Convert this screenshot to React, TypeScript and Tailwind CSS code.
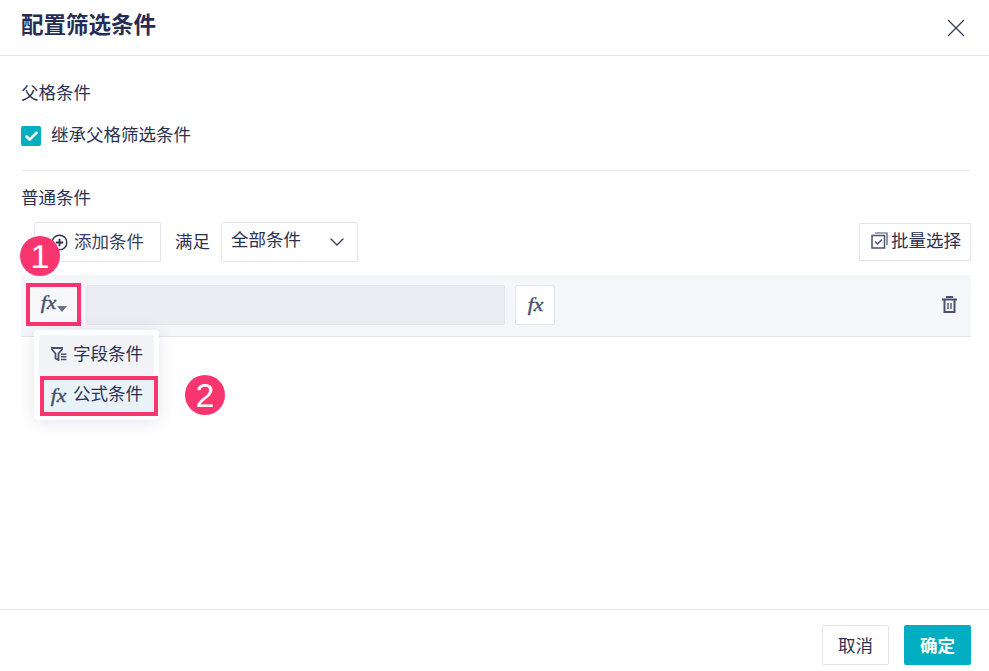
import React from "react";
import { Check, ChevronDown, X } from "lucide-react";

const font = { fontFamily: '"Noto Sans CJK SC", "Noto Sans", sans-serif' };

function Fx({ className = "" }: { className?: string }) {
  return (
    <span
      className={"inline-block italic font-normal leading-none text-[#4a5070] scale-x-[1.2] [-webkit-text-stroke:0.4px_#4a5070] " + className}
      style={{ fontFamily: '"Liberation Serif", serif' }}
    >
      fx
    </span>
  );
}

function Trash() {
  return (
    <svg width="15" height="17" viewBox="0 0 15 17" fill="none" stroke="#4a5070" strokeWidth="2">
      <path d="M0 3.500h15" />
      <path d="M4 1h7" />
      <path d="M2.500 3.500v12.500h10V3.500" />
      <path d="M6 7v6M9 7v6" strokeWidth="1.400" />
    </svg>
  );
}

function Batch() {
  return (
    <svg width="17" height="17" viewBox="0 0 17 17" fill="none" stroke="#4a5070" strokeWidth="1.500">
      <rect x="1" y="3.500" width="12.500" height="12.500" />
      <path d="M4 1h12v12" strokeWidth="1.200" />
      <path d="M4 9.500l2.500 2.500 4.500-4.500" />
    </svg>
  );
}

function FilterIcon() {
  return (
    <svg width="16" height="14" viewBox="0 0 16 14" fill="none">
      <path d="M1 1h10v1.500L7.500 6.500V13L4.500 11.500V6.500L1 2.500z" stroke="#4a5070" strokeWidth="1.800" />
      <path d="M10 7.200h5.500M10 9.800h5.500M10 12.400h5.500" stroke="#4a5070" strokeWidth="1.500" />
    </svg>
  );
}

function PlusCircle() {
  return (
    <svg width="17" height="17" viewBox="0 0 17 17" fill="none" stroke="#2c3152" strokeWidth="1.400">
      <circle cx="8.500" cy="8.500" r="7.300" />
      <path d="M8.500 4.800v7.400M4.800 8.500h7.400" strokeWidth="1.800" />
    </svg>
  );
}

function Badge({ n, className }: { n: number; className: string }) {
  return (
    <div
      className={
        "absolute w-10 h-10 rounded-full bg-[#f9356f] text-white text-[34px] leading-none flex items-center justify-center " +
        className
      }
      style={{ fontFamily: '"Liberation Sans", sans-serif' }}
    >
      {n}
    </div>
  );
}

export default function App() {
  return (
    <div className="relative w-[989px] h-[671px] bg-white flex flex-col text-[#2c3152] overflow-hidden text-[17.5px]" style={font}>
      <header className="h-[56px] shrink-0 border-b border-[#e6e7ea] flex items-center justify-between pl-[21px] pr-[18px] pb-[8px]">
        <h1 className="text-[22.5px] font-bold leading-none text-[#262d55] -mt-[1px]">配置筛选条件</h1>
        <X size={30} strokeWidth={1.1} className="text-[#3a4060] -mb-[8px] shrink-0" />
      </header>

      <main className="flex-1 pl-[21px] pr-[18px] flex flex-col">
        <div className="h-[16px] mt-[28px] leading-[16px]">父格条件</div>
        <label className="flex items-center mt-[26px] h-[20px]">
          <span className="w-5 h-5 rounded-[2px] bg-[#00aec1] flex items-center justify-center">
            <Check size={15} strokeWidth={4.5} className="text-white" />
          </span>
          <span className="ml-[10px] leading-[16px] -mt-[4px]">继承父格筛选条件</span>
        </label>
        <div className="mt-[24px] border-t border-[#ebecef]" />
        <div className="mt-[18px] mb-[1px] h-[16px] leading-[16px]">普通条件</div>

        <div className="mt-[16px] h-[40px] flex items-center pl-[13px]">
          <button className="w-[127px] h-10 border border-[#e3e5ec] rounded-[2px] flex items-center pl-[16px] gap-[6px] text-[#3a4060]">
            <PlusCircle />
            <span className="-mt-[2px]">添加条件</span>
          </button>
          <span className="ml-[14px] -mt-[2px]">满足</span>
          <div className="ml-[11px] w-[137px] h-10 border border-[#e3e5ec] rounded-[2px] flex items-center justify-between pl-[9px] pr-[8px]">
            <span className="-mt-[5px]">全部条件</span>
            <ChevronDown size={24} strokeWidth={1.4} className="text-[#3a4060]" />
          </div>
          <button className="ml-auto w-[112px] h-[38px] border border-[#e3e5ec] flex items-center pl-[11px] gap-[3px]">
            <span className="-mt-[3px] flex">
              <Batch />
            </span>
            <span className="-mt-[3px]">批量选择</span>
          </button>
        </div>

        <div className="mt-[13px] h-[62px] bg-[#f5f6f9] border-b border-[#e3e5ec] flex items-center pl-[5px] pr-[14px] pb-[2px]">
          <div className="w-[55px] h-[43px] border-[4px] border-[#f9356f] bg-[#f7f8fa] flex items-center justify-center pl-[2px] shrink-0">
            <Fx className="text-[18px] -mt-[3px]" />
            <span className="ml-[2px] mt-[9px] w-0 h-0 border-x-[5px] border-x-transparent border-t-[6px] border-t-[#6b6f88]" />
          </div>
          <div className="ml-[5px] w-[419px] h-10 bg-[#ecedf2] border border-[#e3e5ec] rounded-[2px]" />
          <div className="ml-[10px] w-10 h-10 bg-white border border-[#e3e5ec] rounded-[2px] flex items-center justify-center">
            <Fx className="text-[18px]" />
          </div>
          <span className="ml-auto flex -mt-[1px]">
            <Trash />
          </span>
        </div>
      </main>

      <footer className="h-[62px] shrink-0 border-t border-[#e6e7ea] flex items-start justify-end gap-[15px] pt-[15px] pr-[18px]">
        <button className="w-[67px] h-10 border border-[#e3e5ec] rounded-[2px]">取消</button>
        <button className="w-[67px] h-10 bg-[#00aec1] rounded-[2px] font-bold text-white">确定</button>
      </footer>

      <Badge n={1} className="left-[20px] top-[236px]" />
      <Badge n={2} className="left-[185px] top-[375px]" />

      <div className="absolute left-[34px] top-[330px] w-[125px] h-[90px] bg-white rounded-[4px] shadow-[0_2px_16px_rgba(40,50,90,0.12)] p-[5px] flex flex-col">
        <div className="h-[41px] w-[115px] bg-[#f3f4f8] flex items-center pl-[12px] gap-[6px] shrink-0">
          <span className="-mt-[3px] flex">
            <FilterIcon />
          </span>
          <span className="-mt-[5px]">字段条件</span>
        </div>
        <div className="h-[40px] w-[118px] shrink-0 ml-px border-[4px] border-[#f9356f] bg-[#e9f3f7] flex items-center pl-[8px] gap-[8px]">
          <Fx className="text-[18px]" />
          <span className="-mt-[5px]">公式条件</span>
        </div>
      </div>
    </div>
  );
}
